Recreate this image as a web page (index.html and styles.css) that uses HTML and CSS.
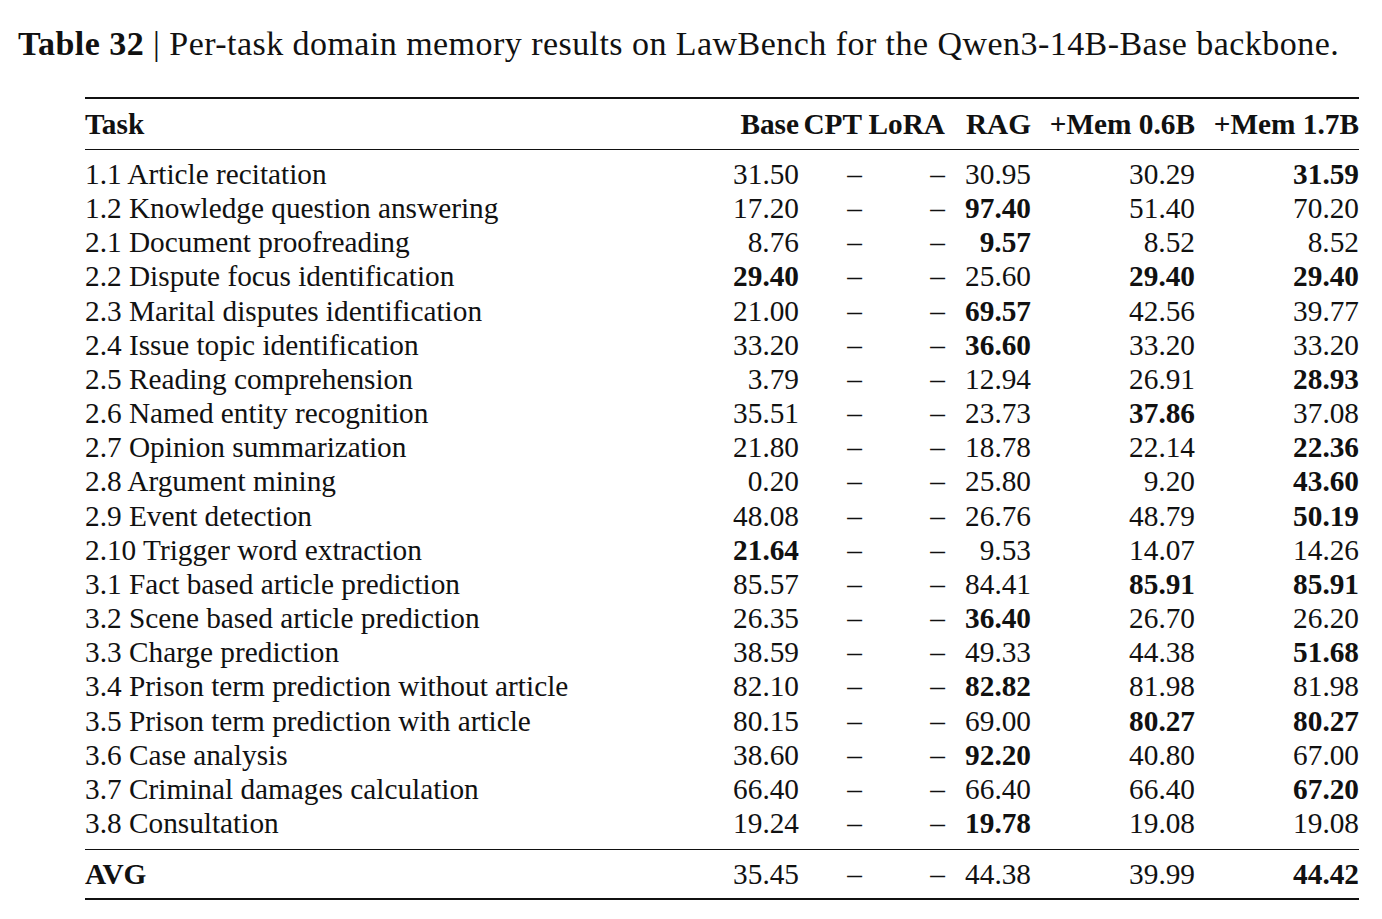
FILE: index.html
```html
<!DOCTYPE html>
<html lang="en">
<head>
<meta charset="utf-8">
<title>Table 32</title>
<link rel="stylesheet" href="styles.css">
</head>
<body>
<div class="page">
  <p class="caption"><b>Table 32</b> | Per-task domain memory results on LawBench for the Qwen3-14B-Base backbone.</p>
  <table class="results">
    <colgroup>
      <col class="c-task"><col class="c-base"><col class="c-cpt"><col class="c-lora"><col class="c-rag"><col class="c-mem"><col class="c-mem">
    </colgroup>
    <thead>
      <tr><th class="task">Task</th><th>Base</th><th>CPT</th><th>LoRA</th><th>RAG</th><th>+Mem 0.6B</th><th>+Mem 1.7B</th></tr>
    </thead>
    <tbody>
      <tr class="first"><td class="task">1.1 Article recitation</td><td>31.50</td><td>–</td><td>–</td><td>30.95</td><td>30.29</td><td><b>31.59</b></td></tr>
      <tr><td class="task">1.2 Knowledge question answering</td><td>17.20</td><td>–</td><td>–</td><td><b>97.40</b></td><td>51.40</td><td>70.20</td></tr>
      <tr><td class="task">2.1 Document proofreading</td><td>8.76</td><td>–</td><td>–</td><td><b>9.57</b></td><td>8.52</td><td>8.52</td></tr>
      <tr><td class="task">2.2 Dispute focus identification</td><td><b>29.40</b></td><td>–</td><td>–</td><td>25.60</td><td><b>29.40</b></td><td><b>29.40</b></td></tr>
      <tr><td class="task">2.3 Marital disputes identification</td><td>21.00</td><td>–</td><td>–</td><td><b>69.57</b></td><td>42.56</td><td>39.77</td></tr>
      <tr><td class="task">2.4 Issue topic identification</td><td>33.20</td><td>–</td><td>–</td><td><b>36.60</b></td><td>33.20</td><td>33.20</td></tr>
      <tr><td class="task">2.5 Reading comprehension</td><td>3.79</td><td>–</td><td>–</td><td>12.94</td><td>26.91</td><td><b>28.93</b></td></tr>
      <tr><td class="task">2.6 Named entity recognition</td><td>35.51</td><td>–</td><td>–</td><td>23.73</td><td><b>37.86</b></td><td>37.08</td></tr>
      <tr><td class="task">2.7 Opinion summarization</td><td>21.80</td><td>–</td><td>–</td><td>18.78</td><td>22.14</td><td><b>22.36</b></td></tr>
      <tr><td class="task">2.8 Argument mining</td><td>0.20</td><td>–</td><td>–</td><td>25.80</td><td>9.20</td><td><b>43.60</b></td></tr>
      <tr><td class="task">2.9 Event detection</td><td>48.08</td><td>–</td><td>–</td><td>26.76</td><td>48.79</td><td><b>50.19</b></td></tr>
      <tr><td class="task">2.10 Trigger word extraction</td><td><b>21.64</b></td><td>–</td><td>–</td><td>9.53</td><td>14.07</td><td>14.26</td></tr>
      <tr><td class="task">3.1 Fact based article prediction</td><td>85.57</td><td>–</td><td>–</td><td>84.41</td><td><b>85.91</b></td><td><b>85.91</b></td></tr>
      <tr><td class="task">3.2 Scene based article prediction</td><td>26.35</td><td>–</td><td>–</td><td><b>36.40</b></td><td>26.70</td><td>26.20</td></tr>
      <tr><td class="task">3.3 Charge prediction</td><td>38.59</td><td>–</td><td>–</td><td>49.33</td><td>44.38</td><td><b>51.68</b></td></tr>
      <tr><td class="task">3.4 Prison term prediction without article</td><td>82.10</td><td>–</td><td>–</td><td><b>82.82</b></td><td>81.98</td><td>81.98</td></tr>
      <tr><td class="task">3.5 Prison term prediction with article</td><td>80.15</td><td>–</td><td>–</td><td>69.00</td><td><b>80.27</b></td><td><b>80.27</b></td></tr>
      <tr><td class="task">3.6 Case analysis</td><td>38.60</td><td>–</td><td>–</td><td><b>92.20</b></td><td>40.80</td><td>67.00</td></tr>
      <tr><td class="task">3.7 Criminal damages calculation</td><td>66.40</td><td>–</td><td>–</td><td>66.40</td><td>66.40</td><td><b>67.20</b></td></tr>
      <tr class="last"><td class="task">3.8 Consultation</td><td>19.24</td><td>–</td><td>–</td><td><b>19.78</b></td><td>19.08</td><td>19.08</td></tr>
    </tbody>
    <tfoot>
      <tr><th class="task">AVG</th><td>35.45</td><td>–</td><td>–</td><td>44.38</td><td>39.99</td><td><b>44.42</b></td></tr>
    </tfoot>
  </table>
</div>
</body>
</html>
```

FILE: styles.css
```css
html, body {
  margin: 0;
  padding: 0;
  background: #ffffff;
}

body {
  font-family: "Liberation Serif", "Times New Roman", serif;
  color: #111111;
}

.page {
  width: 1382px;
  height: 919px;
  padding-top: 24px;
  box-sizing: border-box;
}

.caption {
  margin: 0 0 0 18px;
  font-size: 34px;
  letter-spacing: 0.45px;
  line-height: 40px;
  white-space: nowrap;
}

.caption b {
  font-weight: bold;
}

.results {
  margin: 33px 0 0 85px;
  width: 1274px;
  table-layout: fixed;
  border-collapse: collapse;
  font-size: 29.3px;
  border-top: 2px solid #111;
  border-bottom: 2.5px solid #111;
}

.c-task { width: 644px; }
.c-base { width: 70px; }
.c-cpt { width: 63px; }
.c-lora { width: 83px; }
.c-rag { width: 86px; }
.c-mem { width: 164px; }

.results th,
.results td {
  padding: 0;
  text-align: right;
  white-space: nowrap;
  vertical-align: middle;
}

.results .task {
  text-align: left;
}

.results thead th {
  font-weight: bold;
  height: 50px;
  border-bottom: 1.5px solid #111;
}

.results tbody td {
  height: 34.15px;
  line-height: 34.15px;
}

.results tbody tr.first td {
  padding-top: 7px;
}

.results tbody tr.last td {
  padding-bottom: 9px;
}

.results tfoot th,
.results tfoot td {
  height: 48px;
  border-top: 1.5px solid #111;
}

.results tfoot th {
  font-weight: bold;
}

.results b {
  font-weight: bold;
}
```
